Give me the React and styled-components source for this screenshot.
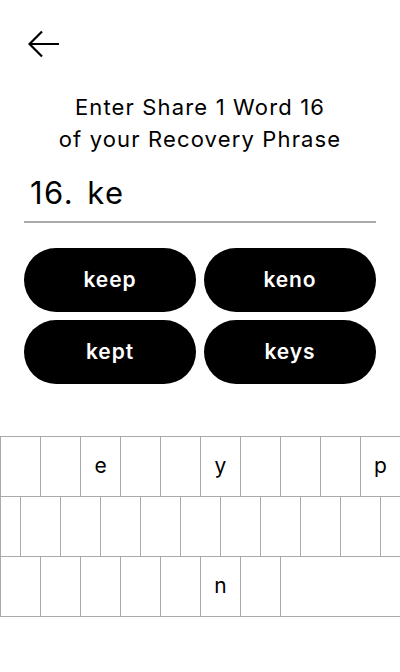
import React from "react";
import styled, { createGlobalStyle } from "styled-components";

const Global = createGlobalStyle`
  html, body { margin: 0; padding: 0; background: #fff; }
  body { font-family: Inter, "Liberation Sans", sans-serif; color: #000; }
  * { box-sizing: border-box; }
`;

const Page = styled.div`
  width: 400px;
  height: 672px;
  display: flex;
  flex-direction: column;
  background: #fff;
  overflow: hidden;
`;

const Header = styled.div`
  height: 88px;
  display: flex;
  align-items: center;
  padding: 0 28px;
`;

const BackButton = styled.button`
  border: 0;
  background: none;
  padding: 0;
  display: flex;
  cursor: pointer;
`;

const Title = styled.h1`
  margin: 3px 0 0;
  font-size: 22px;
  line-height: 32px;
  font-weight: 400;
  text-align: center;
  letter-spacing: 1.15px;
`;

const InputRow = styled.div`
  margin: 18px 24px 0;
  padding: 0 0 8px 6px;
  font-size: 31px;
  line-height: 40px;
  letter-spacing: 1.5px;
  border-bottom: 2px solid #aaa;
  display: flex;
  gap: 13px;
`;

const Suggestions = styled.div`
  margin: 25px 24px 0;
  display: grid;
  grid-template-columns: 1fr 1fr;
  gap: 8px;
`;

const WordButton = styled.button`
  height: 64px;
  border: 0;
  border-radius: 32px;
  background: #000;
  color: #fff;
  font-family: Inter, "Liberation Sans", sans-serif;
  font-size: 21px;
  font-weight: 600;
  letter-spacing: 0.9px;
  display: flex;
  align-items: center;
  justify-content: center;
  padding: 0 0 2px;
`;

const Keyboard = styled.div`
  margin-top: 52px;
  border-bottom: 1px solid #aaa;
  width: 400px;
`;

const KeyRow = styled.div`
  display: flex;
  height: 60px;
`;

const Key = styled.div`
  width: ${(p) => p.$w}px;
  height: 60px;
  flex: none;
  border-top: 1px solid #aaa;
  border-left: 1px solid #aaa;
  display: flex;
  align-items: center;
  justify-content: center;
  font-size: 21px;
  font-weight: 400;
  padding-bottom: 3px;
`;

const rows = [
  { keys: "qwertyuiop".split("").map((c) => ({ c, w: 40 })) },
  {
    keys: [
      { c: "", w: 20 },
      ..."asdfghjkl".split("").map((c) => ({ c, w: 40 })),
      { c: "", w: 20 },
    ],
  },
  {
    keys: [...("zxcvbnm".split("").map((c) => ({ c, w: 40 }))), { c: "", w: 120 }],
  },
];

const enabled = new Set(["e", "y", "p", "n"]);

export default function App() {
  return (
    <Page>
      <Global />
      <Header>
        <BackButton aria-label="Back">
          <svg width="32" height="28" viewBox="0 0 32 28" fill="none">
            <path
              d="M1.5 14 H31 M14 1.5 L1.5 14 L14 26.5"
              stroke="#000"
              strokeWidth="2.2"
              strokeLinecap="butt"
              strokeLinejoin="miter"
            />
          </svg>
        </BackButton>
      </Header>
      <Title>
        Enter Share 1 Word 16
        <br />
        of your Recovery Phrase
      </Title>
      <InputRow>
        <span>16.</span>
        <span>ke</span>
      </InputRow>
      <Suggestions>
        {["keep", "keno", "kept", "keys"].map((w) => (
          <WordButton key={w}>{w}</WordButton>
        ))}
      </Suggestions>
      <Keyboard>
        {rows.map((r, i) => (
          <KeyRow key={i}>
            {r.keys.map((k, j) => (
              <Key key={j} $w={k.w}>
                {enabled.has(k.c) ? k.c : ""}
              </Key>
            ))}
          </KeyRow>
        ))}
      </Keyboard>
    </Page>
  );
}
